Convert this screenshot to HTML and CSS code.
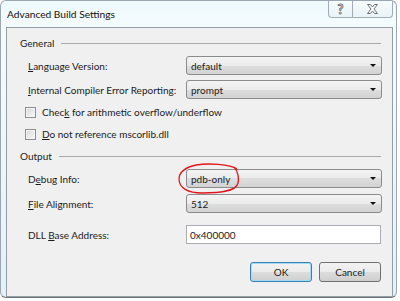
FILE: index.html
```html
<!DOCTYPE html>
<html lang="en">
<head>
    <meta charset="UTF-8">
    <meta name="viewport" content="width=device-width, initial-scale=1.0">
    <title>Advanced Build Settings</title>
    <link rel="stylesheet" href="styles.css">
</head>
<body>
    <div class="window">
        <div class="titlebar">
            <span class="title">Advanced Build Settings</span>
            <div class="caption-buttons">
                <span class="cap-btn help">?</span>
                <span class="cap-btn close">
                    <svg width="11" height="10" viewBox="0 0 11 10">
                        <path d="M0.5 0.5 H3.5 L5.5 3 L7.5 0.5 H10.5 L7 5 L10.5 9.5 H7.5 L5.5 7 L3.5 9.5 H0.5 L4 5 Z" fill="#fff" stroke="#6b7178" stroke-width="1"/>
                    </svg>
                </span>
            </div>
        </div>

        <div class="client">
            <div class="group-head"><span>General</span><span class="rule"></span></div>

            <div class="field">
                <label><u>L</u>anguage Version:</label>
                <div class="combo">default</div>
            </div>
            <div class="field">
                <label><u>I</u>nternal Compiler Error Reporting:</label>
                <div class="combo">prompt</div>
            </div>
            <div class="check">
                <span class="box"></span>
                <span>Chec<u>k</u> for arithmetic overflow/underflow</span>
            </div>
            <div class="check">
                <span class="box"></span>
                <span><u>D</u>o not reference mscorlib.dll</span>
            </div>

            <div class="group-head out"><span>Output</span><span class="rule"></span></div>

            <div class="field">
                <label>D<u>e</u>bug Info:</label>
                <div class="combo marked">
                    pdb-only
                    <svg class="circle" width="62" height="32" viewBox="0 0 62 32">
                        <path d="M59 6 C52 1 30 0 18 2 C8 4 1 9 1 16 C1 25 10 30 24 30 C40 30 58 29 60 20 C61 15 60 8 56 4" fill="none" stroke="#e3151a" stroke-width="1.3"/>
                    </svg>
                </div>
            </div>
            <div class="field gap6">
                <label><u>F</u>ile Alignment:</label>
                <div class="combo">512</div>
            </div>
            <div class="field dll">
                <label>DLL <u>B</u>ase Address:</label>
                <div class="textbox">0x400000</div>
            </div>

            <div class="buttons">
                <button class="btn default">OK</button>
                <button class="btn">Cancel</button>
            </div>
        </div>
    </div>
</body>
</html>
```

FILE: styles.css
```css
body {
    margin: 0;
    background-color: #fff;
    font-family: Lato, sans-serif;
    font-size: 10px;
    color: #1b1b1b;
}
.window {
    width: 387px;
    height: 296px;
    padding: 0 3px 0 5px;
    border: 1px solid #9ba7b0;
    border-bottom-color: #6c737a;
    border-radius: 6px;
    background: linear-gradient(to bottom, #eefafd, #f6fcfe 30px, #e2f1f8);
    display: flex;
    flex-direction: column;
}
.titlebar {
    height: 26px;
    display: flex;
    align-items: flex-start;
}
.title {
    margin: 7px 0 0 1px;
    font-size: 10.2px;
    color: #111;
}
.caption-buttons {
    margin-left: auto;
    display: flex;
    height: 16px;
    border: 1px solid #a3acb4;
    border-top: none;
    border-radius: 0 0 4px 4px;
    background: linear-gradient(to bottom, #f7fcfe, #e9f3f8);
}
.cap-btn {
    display: flex;
    align-items: center;
    justify-content: center;
}
.help {
    width: 23px;
    border-right: 1px solid #a3acb4;
    font-size: 13px;
    font-weight: bold;
    color: #fff;
    -webkit-text-stroke: 0.8px #5e656c;
}
.close {
    width: 39px;
}
.client {
    flex: 1;
    border: 1px solid #939ea7;
    background-color: #f0f0f0;
    padding: 7px 10px 10px 13px;
    display: flex;
    flex-direction: column;
}
.group-head {
    height: 16px;
    display: flex;
    align-items: center;
}
.group-head.out {
    margin-top: 6px;
}
.rule {
    flex: 1;
    height: 1px;
    margin: 0 1px 0 7px;
    background-color: #a9a9a9;
}
.field {
    height: 19px;
    margin-top: 5px;
    padding-left: 8px;
    display: flex;
    align-items: center;
}
.field.gap6 {
    margin-top: 6px;
}
.field.dll {
    margin-top: 12px;
}
.field label {
    width: 158px;
    white-space: nowrap;
}
.combo {
    position: relative;
    width: 186px;
    height: 17px;
    padding-left: 4px;
    padding-right: 4px;
    border: 1px solid #8b8b8b;
    border-radius: 3px;
    background: linear-gradient(to bottom, #f4f4f4, #ebebeb 50%, #dedede 50%, #d2d2d2);
    display: flex;
    align-items: center;
}
.combo::after {
    content: "";
    position: absolute;
    right: 5px;
    top: 7px;
    border-left: 3px solid transparent;
    border-right: 3px solid transparent;
    border-top: 3px solid #111;
}
.circle {
    position: absolute;
    left: -9px;
    top: -7px;
}
.textbox {
    width: 190px;
    height: 17px;
    padding-left: 3px;
    border: 1px solid #abadb3;
    background-color: #fff;
    display: flex;
    align-items: center;
}
.check {
    height: 16px;
    margin-top: 5px;
    padding-left: 5px;
    display: flex;
    align-items: center;
}
.check + .check {
    margin-top: 6px;
}
.box {
    width: 9px;
    height: 9px;
    margin-right: 6px;
    border: 1px solid #8e8f8f;
    background: linear-gradient(135deg, #d6d6d6, #fafafa);
    box-shadow: inset 0 0 0 1px #f4f4f4;
}
.buttons {
    margin-top: 18px;
    padding-right: 1px;
    display: flex;
    justify-content: flex-end;
    gap: 7px;
}
.btn {
    width: 62px;
    height: 20px;
    padding: 0;
    border: 1px solid #707070;
    border-radius: 3px;
    background: linear-gradient(to bottom, #f2f2f2, #ebebeb 50%, #dddddd 50%, #cfcfcf);
    font-family: Lato, sans-serif;
    font-size: 10px;
    color: #1b1b1b;
}
.btn.default {
    border-color: #3c7fb1;
    box-shadow: inset 0 0 0 1px #9edbf5;
}
```
